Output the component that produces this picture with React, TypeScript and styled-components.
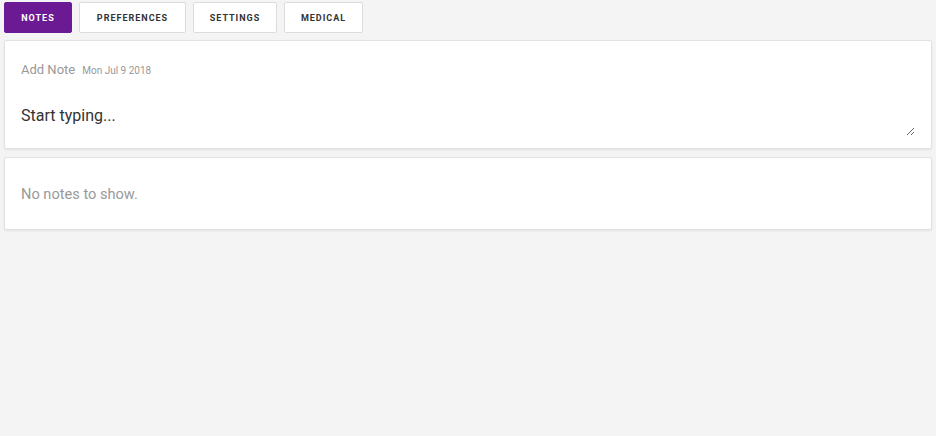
import React, { useState } from 'react';
import styled, { createGlobalStyle } from 'styled-components';

const GlobalStyle = createGlobalStyle`
  html, body {
    margin: 0;
    padding: 0;
    background: #f4f4f4;
    font-family: Roboto, "Liberation Sans", Arial, sans-serif;
  }
`;

const Page = styled.div`
  padding: 2px 4px 0 4px;
  width: 928px;
`;

const Tabs = styled.nav`
  display: flex;
  gap: 7px;
  margin-bottom: 7px;
`;

const Tab = styled.button<{ $active?: boolean; $width: number }>`
  width: ${(p) => p.$width}px;
  height: 31px;
  padding: 0;
  border-radius: 2px;
  border: 1px solid ${(p) => (p.$active ? '#6a1b9a' : '#dcdcdc')};
  background: ${(p) => (p.$active ? '#6c1a94' : '#fff')};
  color: ${(p) => (p.$active ? '#fff' : '#333')};
  font-family: Roboto, "Liberation Sans", Arial, sans-serif;
  font-size: 9px;
  font-weight: 700;
  letter-spacing: 1px;
  text-transform: uppercase;
  cursor: pointer;
`;

const Card = styled.section`
  background: #fff;
  border: 1px solid #e2e2e2;
  border-radius: 2px;
  box-shadow: 0 1px 2px rgba(0, 0, 0, 0.08);
  box-sizing: border-box;
  margin-bottom: 8px;
`;

const NoteCard = styled(Card)`
  padding: 19px 16px 12px 16px;
  height: 109px;
`;

const Header = styled.div`
  display: flex;
  align-items: baseline;
  gap: 7px;
  height: 20px;
  line-height: 20px;
  margin-bottom: 16px;
`;

const Title = styled.span`
  font-size: 13px;
  color: #999;
`;

const DateText = styled.span`
  font-size: 10px;
  color: #999;
`;

const Input = styled.textarea`
  display: block;
  width: 100%;
  height: 40px;
  box-sizing: border-box;
  border: none;
  outline: none;
  padding: 10px 0;
  margin: 0;
  font-family: Roboto, "Liberation Sans", Arial, sans-serif;
  font-size: 16px;
  line-height: 20px;
  color: #333;
  background: transparent;
  &::placeholder {
    color: #333;
  }
`;

const EmptyCard = styled(Card)`
  padding: 26px 16px 25px 16px;
  height: 73px;
`;

const EmptyText = styled.div`
  font-size: 14.6px;
  line-height: 20px;
  color: #999;
`;

const tabs = [
  { label: 'Notes', width: 68 },
  { label: 'Preferences', width: 107 },
  { label: 'Settings', width: 84 },
  { label: 'Medical', width: 79 },
];

export default function App() {
  const [active, setActive] = useState('Notes');
  const [text, setText] = useState('');

  return (
    <Page>
      <GlobalStyle />
      <Tabs>
        {tabs.map((t) => (
          <Tab
            key={t.label}
            $width={t.width}
            $active={active === t.label}
            onClick={() => setActive(t.label)}
          >
            {t.label}
          </Tab>
        ))}
      </Tabs>
      <NoteCard>
        <Header>
          <Title>Add Note</Title>
          <DateText>Mon Jul 9 2018</DateText>
        </Header>
        <Input
          placeholder="Start typing..."
          value={text}
          onChange={(e) => setText(e.target.value)}
        />
      </NoteCard>
      <EmptyCard>
        <EmptyText>No notes to show.</EmptyText>
      </EmptyCard>
    </Page>
  );
}
